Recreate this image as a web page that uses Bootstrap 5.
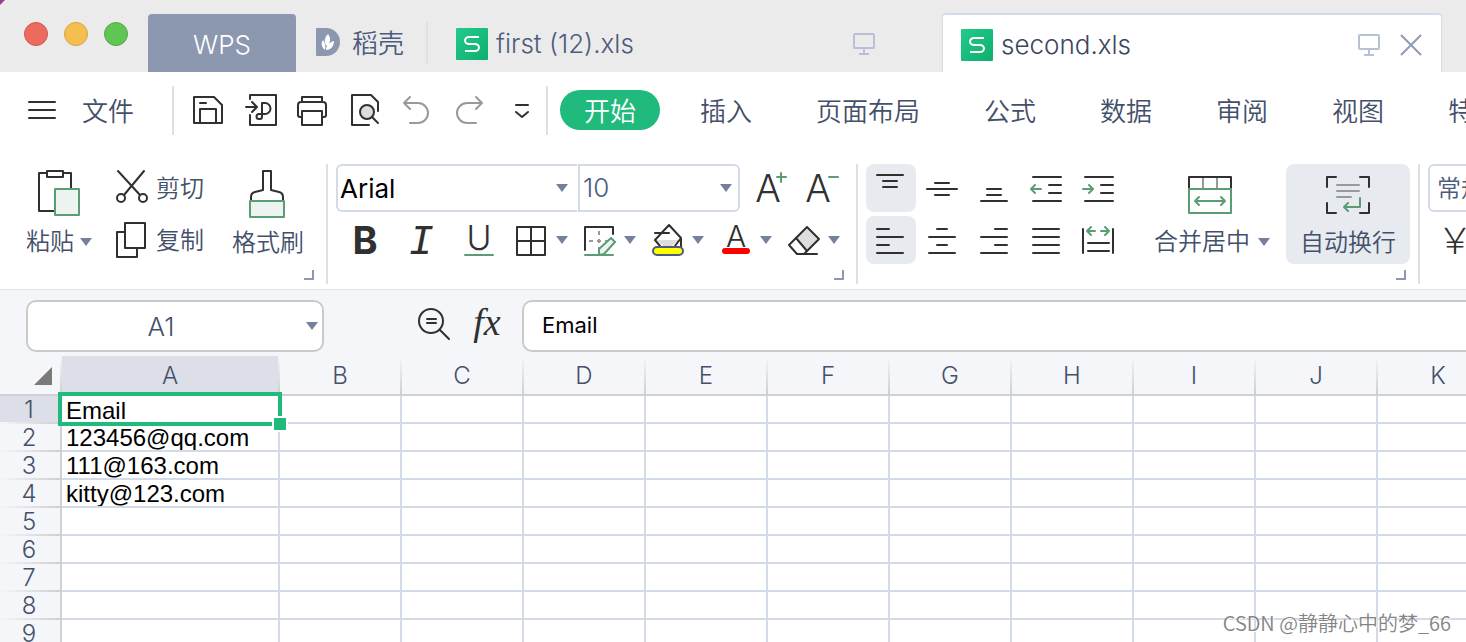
<!DOCTYPE html>
<html lang="zh-CN">
<head>
<meta charset="utf-8">
<meta name="viewport" content="width=device-width, initial-scale=1">
<title>second.xls - WPS</title>
<link href="https://cdn.jsdelivr.net/npm/bootstrap@5.3.0/dist/css/bootstrap.min.css" rel="stylesheet">
<style>
  :root { --ink:#44506a; --slate:#4d5b7c; --line:#d3dbe9; --green:#20ba7d; --leaf:#5a9c74; --pane:#f5f6f9; }
  body { font-family:Inter,"Noto Sans CJK SC",sans-serif; font-weight:350; color:var(--ink); font-size:24px; line-height:32px; background:#fff; }
  svg { display:block; flex:none; overflow:visible; }
  .ico { fill:none; stroke:#303030; stroke-width:2; stroke-linecap:round; stroke-linejoin:round; }
  .ico text { fill:#303030; stroke:none; text-anchor:middle; font-weight:300; }
  .ico .heavy { font-weight:700; }
  .leaf { stroke:var(--leaf); }
  .leaf-fill { stroke:var(--leaf); fill:#edf4f0; }
  .mute { stroke:#999; }
  .caret-dn { fill:#75819c; }
  .rule { width:2px; background:#e0e0e2; flex:none; }
  .tool { padding:0; border:0; border-radius:8px; font:inherit; color:inherit; background:none; white-space:nowrap; flex:none; }
  .tool.active { background:#e7eaef; color:inherit; }

  .tabstrip { height:72px; background:linear-gradient(135deg,#9a3d90 3px,#ebebeb 4px); font-size:26px; }
  .lights { padding:22px 20px 0 24px; }
  .light { width:24px; height:24px; border-radius:50%; border:1px solid; padding:0; }
  .light-r { background:#ec6a5e; border-color:#d5554c; }
  .light-y { background:#f5bf4f; border-color:#d6a243; }
  .light-g { background:#61c554; border-color:#50a845; }
  .home-tab { width:148px; height:58px; background:#8c97b0; color:#fff; border-radius:4px 4px 0 0; padding-top:4px; }
  .shell-tab, .file-tab { color:var(--slate); height:58px; padding-top:2px; }
  .shell-tab { padding-left:20px; padding-right:22px; }
  .shell-rule { height:42px; margin:0 8px 8px 0; }
  .file-tab { flex:0 1 506px; padding-left:20px; padding-right:66px; }
  .file-tab.current { flex-basis:500px; background:#fff; color:#3b465e; border:1px solid var(--line); border-top-width:2px; border-bottom:0; border-radius:4px 4px 0 0; padding-left:18px; padding-right:20px; height:59px; }

  .menurow { height:76px; font-size:26px; }
  .menurow .rule { height:49px; }
  .file-menu { margin:4px 38px 0 22px; }
  .menutabs { gap:16px; }
  .menutabs .nav-link { padding:2px 24px 0; height:40px; line-height:40px; border-radius:20px; color:var(--ink); white-space:nowrap; }
  .menutabs .nav-link.active { background:var(--green); color:#fff; }

  .ribbon { padding:16px 0 5px; border-bottom:1px solid #e0e2e8; }
  .group { height:120px; flex:none; }
  .group-end { height:20px; padding:6px 12px 0 0; }
  .big { height:100px; }
  .big .cap { height:46px; line-height:50px; padding-top:2px; }
  .big .cap.d-block { padding-top:0; }
  .half { height:48px; }
  .half span { padding-top:2px; }
  .fmt { padding-left:20px; }
  .fmt-drop { gap:16px; margin-left:6px; }
  .pick { height:48px; border:2px solid var(--line); background:#fff; color:var(--slate); font-size:26px; font-weight:350; padding:0 2px; appearance:none;
    background-image:url("data:image/svg+xml,%3Csvg xmlns='http://www.w3.org/2000/svg' width='12' height='8'%3E%3Cpath d='M0 0h12L6 8z' fill='%2375819c'/%3E%3C/svg%3E"); background-repeat:no-repeat; background-position:right 6px center; }
  .pick-font { width:241px; border-right:0; border-radius:6px 0 0 6px; color:#000; font-weight:400; background-position:right 9px center; padding-top:2px; }
  .pick-size { width:162px; border-radius:0 6px 6px 0; margin-left:1px; padding-left:3px; }
  .pick-num { width:180px; border-radius:6px; font-size:24px; padding-left:7px; padding-top:2px; }
  .aligns { display:grid; grid-template-columns:repeat(5,50px); gap:4px 2px; }

  .fbar { background:var(--pane); padding:10px 0 4px 26px; }
  .box { height:52px; border:2px solid #cacaca; background-color:#fff; font-weight:350; }
  .namebox { width:298px; border-radius:10px; color:var(--ink); text-align:center; font-size:26px; padding:0 28px 0 0; line-height:48px;
    background-image:url("data:image/svg+xml,%3Csvg xmlns='http://www.w3.org/2000/svg' width='12' height='8'%3E%3Cpath d='M0 0h12L6 8z' fill='%2375819c'/%3E%3C/svg%3E"); background-repeat:no-repeat; background-position:right 4px center; }
  .formula { border-right:0; border-radius:10px 0 0 10px; font-size:22px; font-weight:400; color:#000; padding:0 18px 2px; min-width:0; }

  .sheet { min-height:0; background:#fff; }
  .cells { table-layout:fixed; width:1500px; border-collapse:separate; border-spacing:0; }
  .cells th, .cells td { padding:0; overflow:hidden; }
  .cells th { font-weight:350; text-align:center; background-color:var(--pane); background-repeat:no-repeat; }
  .cells thead th { height:40px; line-height:36px; padding-top:2px; padding-right:2px; border-bottom:2px solid #d1d1d3; background-image:linear-gradient(#f5f6f9,#cfcfd1); background-size:2px 38px; background-position:right top; }
  .cells thead .on { background-color:#dcdfe8; }
  .cells tbody th { height:28px; line-height:26px; padding-right:2px; border-right:2px solid #d1d1d3; background-image:linear-gradient(90deg,#f5f6f9,#cfcfd1); background-size:60px 2px; background-position:left bottom; }
  .cells tbody .on { background-color:#dcdfe8; }
  .cells td { border-right:2px solid var(--line); border-bottom:2px solid var(--line); font:24px/28px "Liberation Sans",Arial,sans-serif; color:#000; height:28px; }
  .cells .val { display:block; height:26px; overflow:hidden; padding-left:4px; }
  .cells td.picked { position:relative; overflow:visible; line-height:30px; }
  .picked::before { content:""; position:absolute; inset:-4px; border:4px solid var(--green); }
  .picked::after { content:""; position:absolute; right:-10px; bottom:-10px; width:16px; height:16px; background:var(--green); border:2px solid #fff; }
  .stamp { position:absolute; right:15px; bottom:4px; font:350 20px/30px "Noto Sans CJK SC",sans-serif; color:#858585; text-shadow:1px 1px 0 #fff; }
</style>
</head>
<body class="vh-100 d-flex flex-column overflow-hidden position-relative">
<svg width="0" height="0" class="position-absolute" aria-hidden="true">
  <defs>
    <linearGradient id="sg" x1="0" y1="0" x2="1" y2="1"><stop offset="0" stop-color="#22cb8b"/><stop offset="1" stop-color="#0eae6d"/></linearGradient>
    <symbol id="sheet-logo" viewBox="0 0 32 32"><rect width="32" height="32" rx="1" fill="url(#sg)"/><path d="M23 9H13a4 3.500 0 0 0 0 7h6a4 3.500 0 0 1 0 7H9" fill="none" stroke="#fff" stroke-width="2"/></symbol>
    <symbol id="monitor" viewBox="0 0 24 24"><path d="M3 2h18a1 1 0 0 1 1 1v12a1 1 0 0 1-1 1H3a1 1 0 0 1-1-1V3a1 1 0 0 1 1-1zM12 16v6M7 22h10" fill="none" stroke="#b8c0d4" stroke-width="2"/></symbol>
    <symbol id="dn" viewBox="0 0 12 8"><path d="M0 0h12L6 8z"/></symbol>
    <symbol id="corner" viewBox="0 0 10 10"><path d="M0 9h9V0" fill="none" stroke="#8c97b0" stroke-width="2"/></symbol>
  </defs>
</svg>

<header class="tabstrip d-flex align-items-end flex-nowrap flex-shrink-0 overflow-hidden">
  <div class="lights d-flex gap-3 align-self-start">
    <button class="light light-r" aria-label="关闭窗口"></button>
    <button class="light light-y" aria-label="最小化"></button>
    <button class="light light-g" aria-label="缩放"></button>
  </div>
  <a href="#" class="home-tab d-flex align-items-center justify-content-center text-decoration-none flex-shrink-0">WPS</a>
  <a href="#" class="shell-tab d-flex align-items-center text-decoration-none flex-shrink-0">
    <svg width="24" height="28" viewBox="0 0 24 28" class="me-2 mb-1"><path d="M1 0h9a14 14 0 0 1 0 28H1a1 1 0 0 1-1-1V1a1 1 0 0 1 1-1z" fill="#8c97b0"/><path d="M11 18C7 14 9 9 12 6c3 4 3 8-1 12zM9 22c-4-3-4-7-2-10 2 3 3 6 2 10zM10 22c0-5 4-8 8-9 0 5-3 9-8 9z" fill="#fff"/></svg>
    <span class="ms-1">稻壳</span>
  </a>
  <span class="rule shell-rule"></span>
  <a href="#" class="file-tab d-flex align-items-center text-decoration-none">
    <svg width="32" height="32" class="me-2"><use href="#sheet-logo"/></svg><span class="text-nowrap">first (12).xls</span>
    <svg width="24" height="24" class="ms-auto"><use href="#monitor"/></svg>
  </a>
  <div class="file-tab current d-flex align-items-center">
    <svg width="32" height="32" class="me-2"><use href="#sheet-logo"/></svg><span class="text-nowrap">second.xls</span>
    <svg width="24" height="24" class="ms-auto me-3"><use href="#monitor"/></svg>
    <button class="tool ms-1" aria-label="关闭标签"><svg width="20" height="22" viewBox="0 0 20 22"><path d="M0 1l20 20M20 1L0 21" stroke="#8f9bb5" stroke-width="2"/></svg></button>
  </div>
</header>

<nav class="menurow d-flex align-items-center flex-nowrap flex-shrink-0 overflow-hidden">
  <button class="tool d-flex align-items-center ms-4" aria-label="菜单"><svg width="36" height="20" viewBox="0 0 36 20" class="ico"><path d="M5 2h26M5 10h26M5 18h26"/></svg></button>
  <button class="tool file-menu">文件</button>
  <span class="rule me-3"></span>
  <div class="d-flex gap-3">
    <button class="tool" aria-label="保存"><svg width="36" height="36" class="ico"><path d="M4 5h20l8 8v18H4zM10 31V17h16v14M10 11h6"/></svg></button>
    <button class="tool" aria-label="输出为PDF"><svg width="36" height="36" class="ico"><path d="M8 7V3h26v30H8V23M4 15h10M10 10l5 5-5 5M20 11h3a5 5 0 0 1 0 11h-6a2.500 2.500 0 0 0 0 5h1a2 2 0 0 0 2-2z"/></svg></button>
    <button class="tool" aria-label="打印"><svg width="36" height="36" class="ico"><path d="M8 10V5h20v5M8 25H6a2 2 0 0 1-2-2V13a3 3 0 0 1 3-3h22a3 3 0 0 1 3 3v10a2 2 0 0 1-2 2h-2M8 19h20v14H8z"/></svg></button>
    <button class="tool" aria-label="打印预览"><svg width="36" height="36" class="ico"><path d="M23 33H6V3h19l7 7v9"/><circle cx="21" cy="20" r="7" fill="#ddd"/><path d="M26 25l6 6"/></svg></button>
    <button class="tool" aria-label="撤销"><svg width="36" height="36" class="ico"><path class="mute" d="M12 5l-6 6 6 6M6 11h14a10 10 0 0 1 0 20h-8"/></svg></button>
    <button class="tool" aria-label="恢复"><svg width="36" height="36" class="ico"><path class="mute" d="M26 5l6 6-6 6M32 11H17a10 10 0 0 0 0 20h9"/></svg></button>
    <button class="tool" aria-label="更多"><svg width="36" height="36" class="ico"><path d="M14 13h12M14 20l6 5 6-5"/></svg></button>
  </div>
  <span class="rule ms-2 me-2"></span>
  <ul class="nav flex-nowrap menutabs ms-1">
    <li><a class="nav-link active" href="#">开始</a></li>
    <li><a class="nav-link" href="#">插入</a></li>
    <li><a class="nav-link" href="#">页面布局</a></li>
    <li><a class="nav-link" href="#">公式</a></li>
    <li><a class="nav-link" href="#">数据</a></li>
    <li><a class="nav-link" href="#">审阅</a></li>
    <li><a class="nav-link" href="#">视图</a></li>
    <li><a class="nav-link" href="#">特色功能</a></li>
  </ul>
</nav>

<section class="ribbon d-flex flex-nowrap flex-shrink-0 overflow-hidden" aria-label="功能区">
  <div class="group" style="width:326px">
    <div class="d-flex" style="padding-left:26px">
      <button class="tool big">
        <svg width="66" height="54" class="ico"><path d="M21 9h-8v38h16M37 9h8v16M21 7h16v6H21z"/><path class="leaf-fill" d="M29 25h24v26H29z"/></svg>
        <span class="cap d-flex align-items-center justify-content-between">粘贴<svg width="12" height="8" class="caret-dn"><use href="#dn"/></svg></span>
      </button>
      <div class="ms-4 d-flex flex-column gap-1">
        <button class="tool half d-flex align-items-center gap-2"><svg width="32" height="48" class="ico"><path d="M2 7l22 24M28 7L8 31"/><circle cx="5" cy="34" r="4"/><circle cx="27" cy="34" r="4"/></svg><span>剪切</span></button>
        <button class="tool half d-flex align-items-center gap-2"><svg width="32" height="48" class="ico"><path d="M9 7h20v25H9zM9 16H1v25h20v-9"/></svg><span>复制</span></button>
      </div>
      <button class="tool big ms-4 ps-1">
        <svg width="72" height="54" class="ico"><path d="M19 36v-3q0-4 4-5l8-2V7h8v19l8 2q4 1 4 5v3"/><path class="leaf-fill" d="M18 37h34v16H18z"/></svg>
        <span class="cap d-block">格式刷</span>
      </button>
    </div>
    <div class="group-end d-flex justify-content-end"><svg width="10" height="10"><use href="#corner"/></svg></div>
  </div>
  <span class="rule"></span>

  <div class="group" style="width:528px">
    <div class="ps-2 d-flex align-items-center half">
      <select class="pick pick-font" aria-label="字体"><option>Arial</option></select>
      <select class="pick pick-size" aria-label="字号"><option>10</option></select>
      <button class="tool ms-2" aria-label="增大字号"><svg width="40" height="48" class="ico"><text x="20" y="38" font-size="38">A</text><path class="leaf" d="M33 9v9M29 13h9"/></svg></button>
      <button class="tool ms-2" aria-label="减小字号"><svg width="40" height="48" class="ico"><text x="22" y="38" font-size="38">A</text><path class="leaf" d="M33 13h9"/></svg></button>
    </div>
    <div class="fmt d-flex half mt-1">
      <div class="d-flex gap-4">
        <button class="tool" aria-label="加粗"><svg width="34" height="48" class="ico"><text class="heavy" x="17" y="38" font-size="38">B</text></svg></button>
        <button class="tool" aria-label="倾斜"><svg width="34" height="48" class="ico"><text x="15" y="38" font-size="42" font-style="italic" font-family="Liberation Mono">I</text></svg></button>
        <button class="tool" aria-label="下划线"><svg width="34" height="48" class="ico"><text x="15" y="34" font-size="34">U</text><path class="leaf" d="M1 39h28"/></svg></button>
      </div>
      <div class="fmt-drop d-flex ms-auto me-3">
        <button class="tool d-flex align-items-center gap-2" aria-label="边框"><svg width="32" height="48" class="ico"><path d="M1 11h28v28H1zM15 11v28M1 25h28"/></svg><svg width="12" height="8" class="caret-dn"><use href="#dn"/></svg></button>
        <button class="tool d-flex align-items-center gap-2" aria-label="绘制边框"><svg width="32" height="48" class="ico"><path d="M1 34V11h28v7"/><path class="mute" stroke-dasharray="4 4" stroke-linecap="butt" d="M5 25h20M15 15v20"/><path class="leaf" d="M1 39h28"/><path class="leaf-fill" d="M15 39v-6l12-11 4 4-11 12z"/></svg><svg width="12" height="8" class="caret-dn"><use href="#dn"/></svg></button>
        <button class="tool d-flex align-items-center gap-2" aria-label="填充颜色"><svg width="32" height="48" class="ico"><path d="M5 24h22l-9 8h-5z" fill="#ddd" stroke="none"/><path d="M8 30l-5-6L17 9l12 13-6 8M29 22v9M3 17h14"/><rect x="1" y="31" width="30" height="8" rx="4" fill="#ff0" stroke="#4d5b80"/></svg><svg width="12" height="8" class="caret-dn"><use href="#dn"/></svg></button>
        <button class="tool d-flex align-items-center gap-2" aria-label="字体颜色"><svg width="32" height="48" class="ico"><text x="16" y="31" font-size="30">A</text><path d="M5 35h22" stroke="red" stroke-width="6"/></svg><svg width="12" height="8" class="caret-dn"><use href="#dn"/></svg></button>
        <button class="tool d-flex align-items-center gap-2" aria-label="清除"><svg width="32" height="48" class="ico"><path d="M8 22l11-11 12 12-12 12z" fill="#ddd"/><path d="M8 22l-7 7 8 9h20M19 35l-3 3"/></svg><svg width="12" height="8" class="caret-dn"><use href="#dn"/></svg></button>
      </div>
    </div>
    <div class="group-end d-flex justify-content-end"><svg width="10" height="10"><use href="#corner"/></svg></div>
  </div>
  <span class="rule"></span>

  <div class="group" style="width:560px">
    <div class="ps-2 d-flex">
      <div class="aligns">
        <button class="tool active" aria-label="顶端对齐"><svg width="50" height="48" class="ico"><path d="M11 11h26M17 17h14M17 23h14"/></svg></button>
        <button class="tool" aria-label="垂直居中"><svg width="50" height="48" class="ico"><path d="M17 19h14M9 25h30M17 31h14"/></svg></button>
        <button class="tool" aria-label="底端对齐"><svg width="50" height="48" class="ico"><path d="M17 25h14M17 31h14M11 37h26"/></svg></button>
        <button class="tool" aria-label="减少缩进"><svg width="50" height="48" class="ico"><path d="M11 13h28M27 21h12M27 29h12M11 37h28"/><path class="leaf" d="M19 25H9M13 21l-4 4 4 4"/></svg></button>
        <button class="tool" aria-label="增加缩进"><svg width="50" height="48" class="ico"><path d="M11 13h28M27 21h12M27 29h12M11 37h28"/><path class="leaf" d="M9 25h10M15 21l4 4-4 4"/></svg></button>
        <button class="tool active" aria-label="左对齐"><svg width="50" height="48" class="ico"><path d="M11 13h12M11 21h26M11 29h12M11 37h26"/></svg></button>
        <button class="tool" aria-label="居中"><svg width="50" height="48" class="ico"><path d="M19 13h10M11 21h26M19 29h10M11 37h26"/></svg></button>
        <button class="tool" aria-label="右对齐"><svg width="50" height="48" class="ico"><path d="M25 13h12M11 21h26M25 29h12M11 37h26"/></svg></button>
        <button class="tool" aria-label="两端对齐"><svg width="50" height="48" class="ico"><path d="M11 13h26M11 21h26M11 29h26M11 37h26"/></svg></button>
        <button class="tool" aria-label="分散对齐"><svg width="50" height="48" class="ico"><path d="M9 13v24M39 13v24M14 27h21M14 35h21"/><path class="leaf" d="M21 15h-8M17 11l-4 4 4 4M27 15h8M31 11l4 4-4 4"/></svg></button>
      </div>
      <button class="tool big" style="margin-left:30px">
        <svg width="48" height="54" viewBox="2 0 48 54" class="ico mx-auto"><path class="mute" d="M17 13v11M31 13v11"/><path d="M3 24V13h42v11"/><path class="leaf" d="M3 25h42v24H3zM9 37h30M13 33l-4 4 4 4M35 33l4 4-4 4"/></svg>
        <span class="cap d-flex align-items-center gap-2">合并居中<svg width="12" height="8" class="caret-dn"><use href="#dn"/></svg></span>
      </button>
      <button class="tool big active ms-3" style="width:124px">
        <svg width="48" height="54" class="ico mx-auto"><path d="M3 23V13h9M36 13h9v10M45 39v10h-9M12 49H3V39"/><path class="mute" d="M13 21h22M13 27h22M13 33h14"/><path class="leaf" d="M36 34v9H20M24 39l-4 4 4 4"/></svg>
        <span class="cap d-block">自动换行</span>
      </button>
    </div>
    <div class="group-end d-flex justify-content-end"><svg width="10" height="10"><use href="#corner"/></svg></div>
  </div>
  <span class="rule"></span>

  <div class="group ps-2">
    <select class="pick pick-num d-block" aria-label="数字格式"><option>常规</option></select>
    <button class="tool mt-1 d-block" aria-label="货币格式"><svg width="52" height="48" class="ico"><text x="27" y="38" font-size="36" font-family="Noto Sans CJK SC">￥</text></svg></button>
  </div>
</section>

<section class="fbar d-flex align-items-center flex-shrink-0">
  <input class="box namebox flex-shrink-0" value="A1" aria-label="名称框">
  <button class="tool" style="margin-left:92px" aria-label="查找"><svg width="36" height="36" viewBox="0 2 36 36" class="ico"><circle cx="15" cy="15" r="12"/><path d="M24 24l9 9M11 13h9M11 17h9"/></svg></button>
  <button class="tool ms-3 me-3" aria-label="插入函数"><svg width="38" height="36" class="ico"><text x="19" y="27" font-size="38" font-style="italic" font-family="Liberation Serif">fx</text></svg></button>
  <input class="box formula flex-grow-1" value="Email" aria-label="编辑栏">
</section>

<main class="sheet flex-grow-1 overflow-hidden">
  <table class="cells">
    <colgroup><col style="width:62px"><col style="width:218px"><col span="10" style="width:122px"></colgroup>
    <thead><tr>
      <th aria-label="全选"><svg width="18" height="18" class="ms-auto me-2"><path d="M18 0v18H0z" fill="#7a7a7a"/></svg></th>
      <th class="on">A</th><th>B</th><th>C</th><th>D</th><th>E</th><th>F</th><th>G</th><th>H</th><th>I</th><th>J</th><th>K</th>
    </tr></thead>
    <tbody id="rows"></tbody>
  </table>
</main>
<div class="stamp">CSDN @静静心中的梦_66</div>

<script src="https://cdn.jsdelivr.net/npm/bootstrap@5.3.0/dist/js/bootstrap.bundle.min.js"></script>
<script>
  const values = ['Email', '123456@qq.com', '111@163.com', 'kitty@123.com'];
  const body = document.getElementById('rows');
  for (let r = 0; r < 9; r++) {
    const tr = body.insertRow();
    const th = document.createElement('th');
    th.textContent = r + 1;
    if (r === 0) th.className = 'on';
    tr.append(th);
    for (let c = 0; c < 11; c++) {
      const td = tr.insertCell();
      if (c === 0 && values[r]) td.innerHTML = '<span class="val">' + values[r] + '</span>';
      if (c === 0 && r === 0) td.className = 'picked';
    }
  }
</script>
</body>
</html>
